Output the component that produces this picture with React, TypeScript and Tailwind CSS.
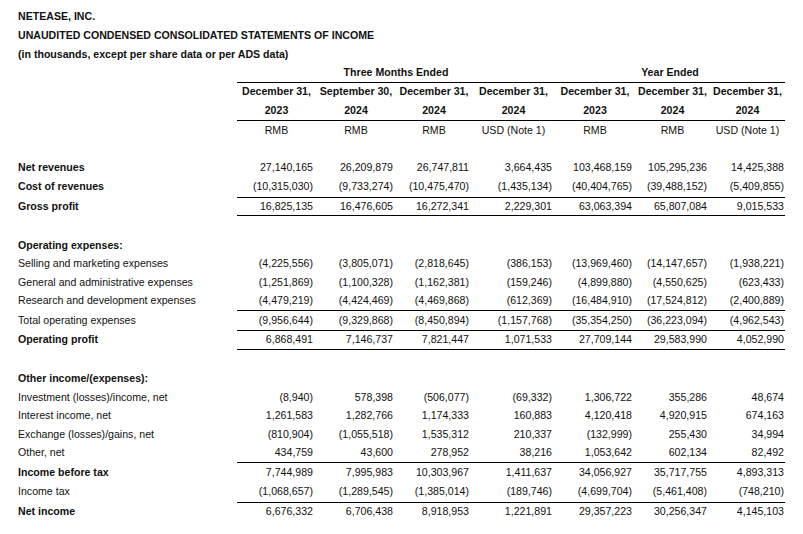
import React from "react";

type Row = {
  label: string;
  bold?: boolean;
  h: string;
  line?: boolean;
  vals?: string[];
};

const widths = ["w-[79px]", "w-[80px]", "w-[76px]", "w-[83px]", "w-[80px]", "w-[75px]", "w-[75px]"];
const pads = ["pr-[3px]", "pr-[3px]", "pr-[3px]", "pr-[3px]", "pr-[3px]", "pr-[3px]", "pr-[1px]"];

const rows: Row[] = [
  { label: "", h: "h-[18px]" },
  { label: "Net revenues", bold: true, h: "h-[19px]", vals: ["27,140,165", "26,209,879", "26,747,811", "3,664,435", "103,468,159", "105,295,236", "14,425,388"] },
  { label: "Cost of revenues", bold: true, h: "h-[21px]", line: true, vals: ["(10,315,030)", "(9,733,274)", "(10,475,470)", "(1,435,134)", "(40,404,765)", "(39,488,152)", "(5,409,855)"] },
  { label: "Gross profit", bold: true, h: "h-[18px]", line: true, vals: ["16,825,135", "16,476,605", "16,272,341", "2,229,301", "63,063,394", "65,807,084", "9,015,533"] },
  { label: "", h: "h-[20px]" },
  { label: "Operating expenses:", bold: true, h: "h-[19px]" },
  { label: "Selling and marketing expenses", h: "h-[18px]", vals: ["(4,225,556)", "(3,805,071)", "(2,818,645)", "(386,153)", "(13,969,460)", "(14,147,657)", "(1,938,221)"] },
  { label: "General and administrative expenses", h: "h-[19px]", vals: ["(1,251,869)", "(1,100,328)", "(1,162,381)", "(159,246)", "(4,899,880)", "(4,550,625)", "(623,433)"] },
  { label: "Research and development expenses", h: "h-[19px]", line: true, vals: ["(4,479,219)", "(4,424,469)", "(4,469,868)", "(612,369)", "(16,484,910)", "(17,524,812)", "(2,400,889)"] },
  { label: "Total operating expenses", h: "h-[20px]", line: true, vals: ["(9,956,644)", "(9,329,868)", "(8,450,894)", "(1,157,768)", "(35,354,250)", "(36,223,094)", "(4,962,543)"] },
  { label: "Operating profit", bold: true, h: "h-[19px]", line: true, vals: ["6,868,491", "7,146,737", "7,821,447", "1,071,533", "27,709,144", "29,583,990", "4,052,990"] },
  { label: "", h: "h-[19px]" },
  { label: "Other income/(expenses):", bold: true, h: "h-[19px]" },
  { label: "Investment (losses)/income, net", h: "h-[19px]", vals: ["(8,940)", "578,398", "(506,077)", "(69,332)", "1,306,722", "355,286", "48,674"] },
  { label: "Interest income, net", h: "h-[18px]", vals: ["1,261,583", "1,282,766", "1,174,333", "160,883", "4,120,418", "4,920,915", "674,163"] },
  { label: "Exchange (losses)/gains, net", h: "h-[19px]", vals: ["(810,904)", "(1,055,518)", "1,535,312", "210,337", "(132,999)", "255,430", "34,994"] },
  { label: "Other, net", h: "h-[19px]", line: true, vals: ["434,759", "43,600", "278,952", "38,216", "1,053,642", "602,134", "82,492"] },
  { label: "Income before tax", bold: true, h: "h-[19px]", vals: ["7,744,989", "7,995,983", "10,303,967", "1,411,637", "34,056,927", "35,717,755", "4,893,313"] },
  { label: "Income tax", h: "h-[21px]", line: true, vals: ["(1,068,657)", "(1,289,545)", "(1,385,014)", "(189,746)", "(4,699,704)", "(5,461,408)", "(748,210)"] },
  { label: "Net income", bold: true, h: "h-[18px]", vals: ["6,676,332", "6,706,438", "8,918,953", "1,221,891", "29,357,223", "30,256,347", "4,145,103"] },
];

const headDates = ["December 31,", "September 30,", "December 31,", "December 31,", "December 31,", "December 31,", "December 31,"];
const headYears = ["2023", "2024", "2024", "2024", "2023", "2024", "2024"];
const headCur = ["RMB", "RMB", "RMB", "USD (Note 1)", "RMB", "RMB", "USD (Note 1)"];

export default function App() {
  return (
    <div
      className="w-[803px] min-h-[534px] bg-white text-[#111] text-[10.6px] pt-[7px]"
      style={{ fontFamily: '"Liberation Sans", Arial, sans-serif' }}
    >
      <div className="pl-[18px] font-bold">
        <div className="h-[19px] flex items-center">NETEASE, INC.</div>
        <div className="h-[19px] flex items-center">UNAUDITED CONDENSED CONSOLIDATED STATEMENTS OF INCOME</div>
        <div className="h-[19px] flex items-center">(in thousands, except per share data or per ADS data)</div>
      </div>

      {/* Header */}
      <div className="flex h-[19px] font-bold">
        <div className="w-[237px] shrink-0" />
        <div className="flex border-b border-black">
          <div className="w-[318px] flex items-center justify-center">Three Months Ended</div>
          <div className="w-[230px] flex items-center justify-center">Year Ended</div>
        </div>
      </div>
      <div className="flex h-[18px] font-bold">
        <div className="w-[237px] shrink-0" />
        <div className="flex">
          {headDates.map((t, i) => (
            <div key={i} className={`${widths[i]} flex items-center justify-center whitespace-nowrap`}>
              {t}
            </div>
          ))}
        </div>
      </div>
      <div className="flex h-[20px] font-bold">
        <div className="w-[237px] shrink-0" />
        <div className="flex border-b border-black">
          {headYears.map((t, i) => (
            <div key={i} className={`${widths[i]} flex items-center justify-center`}>
              {t}
            </div>
          ))}
        </div>
      </div>
      <div className="flex h-[19px]">
        <div className="w-[237px] shrink-0" />
        <div className="flex">
          {headCur.map((t, i) => (
            <div key={i} className={`${widths[i]} flex items-center justify-center whitespace-nowrap`}>
              {t}
            </div>
          ))}
        </div>
      </div>

      {/* Body */}
      {rows.map((r, ri) => (
        <div key={ri} className={`flex ${r.h}`}>
          <div
            className={`w-[237px] shrink-0 pl-[18px] flex items-center whitespace-nowrap ${r.bold ? "font-bold" : ""} ${
              r.line ? "pb-[1px]" : ""
            }`}
          >
            {r.label}
          </div>
          <div className={`flex ${r.line ? "border-b border-black" : ""}`}>
            {widths.map((w, i) => (
              <div key={i} className={`${w} ${pads[i]} flex items-center justify-end whitespace-nowrap`}>
                {r.vals ? r.vals[i] : ""}
              </div>
            ))}
          </div>
        </div>
      ))}
    </div>
  );
}
